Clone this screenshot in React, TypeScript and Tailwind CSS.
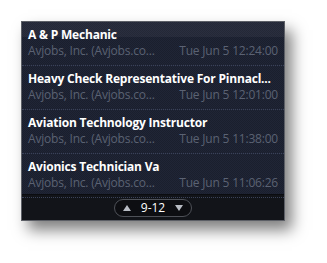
import React from "react";

const rows = [
  { title: "A & P Mechanic", time: "Tue Jun 5 12:24:00" },
  { title: "Heavy Check Representative For Pinnacl...", time: "Tue Jun 5 12:01:00" },
  { title: "Aviation Technology Instructor", time: "Tue Jun 5 11:38:00" },
  { title: "Avionics Technician Va", time: "Tue Jun 5 11:06:26" },
];

export default function App() {
  return (
    <div className="w-[327px] h-[263px] bg-white pt-[21px] pl-[21px]" style={{ fontFamily: '"Open Sans", "Noto Sans", sans-serif' }}>
      <div className="w-[264px] h-[200px] border border-[#5c5f66] flex flex-col overflow-hidden shadow-[7px_9px_14px_rgba(0,0,0,0.5)] bg-[#1d2231] bg-[image:linear-gradient(to_bottom,rgba(255,255,255,0.045)_0,rgba(255,255,255,0.045)_15px,transparent_15px),repeating-conic-gradient(#202536_0_25%,#1a1f2d_0_50%)] bg-[length:100%_100%,2px_2px]">
        <div className="h-[172px] overflow-hidden flex flex-col">
          {rows.map((r, i) => (
            <div key={i} className="shrink-0 h-[44px] pt-[5px] pl-[6px] pr-[6px] border-b border-dotted border-[#3a4259] flex flex-col">
              <div className="h-[16px] text-[12px] leading-[16px] font-bold text-white whitespace-nowrap tracking-[-0.2px]">{r.title}</div>
              <div className="h-[16px] flex justify-between text-[12px] leading-[16px] text-[#5b6273] whitespace-nowrap tracking-[-0.2px]">
                <span>Avjobs, Inc. (Avjobs.co...</span>
                <span>{r.time}</span>
              </div>
            </div>
          ))}
        </div>
        <div className="flex-1 bg-[#121419] border-t border-[#0b0c10] flex flex-col">
          <div className="mt-[2px] border-t border-dotted border-[#3a4259]" />
          <div className="flex justify-center pt-[1px]">
            <div className="w-[78px] h-[18px] rounded-full border border-[#4e5158] bg-[#0d0e12] flex items-center justify-between px-[8px]">
              <svg width="8" height="6" viewBox="0 0 8 6"><path d="M0 6 L4 0 L8 6 Z" fill="#b8bcc4" /></svg>
              <span className="text-[12px] leading-[16px] text-white">9-12</span>
              <svg width="8" height="6" viewBox="0 0 8 6"><path d="M0 0 L8 0 L4 6 Z" fill="#b8bcc4" /></svg>
            </div>
          </div>
        </div>
      </div>
    </div>
  );
}
